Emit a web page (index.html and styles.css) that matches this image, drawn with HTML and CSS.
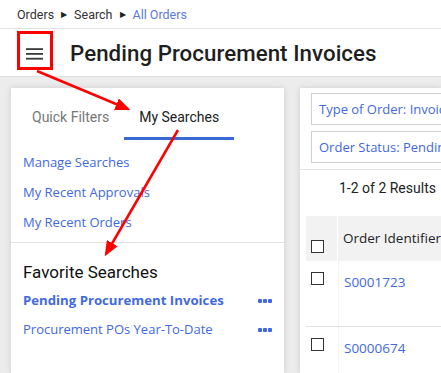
FILE: index.html
```html
<!DOCTYPE html>
<html>
<head>
<meta charset="utf-8">
<link rel="stylesheet" href="styles.css">
</head>
<body>
<nav class="crumbs">
  <span>Orders</span><span class="tri">&#9654;</span><span>Search</span><span class="tri">&#9654;</span><a class="crumb-link">All Orders</a>
</nav>
<header class="header">
  <button class="menu" aria-label="Menu">
    <svg width="17" height="12" viewBox="0 0 17 12"><rect x="0" y="0.2" width="17" height="1.8" fill="#3a3a3a"/><rect x="0" y="5" width="17" height="1.8" fill="#3a3a3a"/><rect x="0" y="9.8" width="17" height="1.8" fill="#3a3a3a"/></svg>
  </button>
  <h1 class="title">Pending Procurement Invoices</h1>
</header>
<main class="main">
  <section class="card left">
    <div class="tabs">
      <div class="tab">Quick Filters</div>
      <div class="tab active">My Searches</div>
    </div>
    <ul class="links">
      <li><a>Manage Searches</a></li>
      <li><a>My Recent Approvals</a></li>
      <li><a>My Recent Orders</a></li>
    </ul>
    <h2 class="fav-title">Favorite Searches</h2>
    <ul class="favs">
      <li class="fav current"><a>Pending Procurement Invoices</a><span class="dots"><i></i><i></i><i></i></span></li>
      <li class="fav"><a>Procurement POs Year-To-Date</a><span class="dots"><i></i><i></i><i></i></span></li>
    </ul>
  </section>
  <section class="card right">
    <div class="filters">
      <div class="chip">Type of Order: Invoice</div>
      <div class="chip">Order Status: Pending</div>
    </div>
    <div class="count">1-2 of 2 Results</div>
    <div class="table">
      <div class="row head">
        <div class="cell check"><span class="box"></span></div>
        <div class="cell id">Order Identifier</div>
      </div>
      <div class="row">
        <div class="cell check"><span class="box"></span></div>
        <div class="cell id"><a>S0001723</a></div>
      </div>
      <div class="row">
        <div class="cell check"><span class="box"></span></div>
        <div class="cell id"><a>S0000674</a></div>
      </div>
    </div>
  </section>
</main>
<svg class="annot" width="441" height="373" viewBox="0 0 441 373">
  <defs>
    <marker id="ah" markerWidth="6" markerHeight="5" refX="5" refY="2.5" orient="auto" markerUnits="strokeWidth">
      <path d="M0,0 L6,2.5 L0,5 Z" fill="#ff0000"/>
    </marker>
  </defs>
  <rect x="18.5" y="32.5" width="33" height="36" fill="none" stroke="#ff0000" stroke-width="3"/>
  <line x1="37" y1="71" x2="128" y2="109" stroke="#ff0000" stroke-width="2.5" marker-end="url(#ah)"/>
  <line x1="178" y1="130" x2="106" y2="254" stroke="#ff0000" stroke-width="2.5" marker-end="url(#ah)"/>
</svg>
</body>
</html>
```

FILE: styles.css
```css
* { box-sizing: border-box; }
html, body { margin: 0; padding: 0; }
body {
  width: 441px;
  height: 373px;
  overflow: hidden;
  position: relative;
  font-family: Roboto, "Liberation Sans", sans-serif;
  color: #212121;
  background: #ececec;
}
a { text-decoration: none; cursor: pointer; }
ul { list-style: none; margin: 0; padding: 0; }

.crumbs {
  height: 29px;
  background: #fff;
  border-bottom: 1px solid #e4e4e4;
  display: flex;
  align-items: center;
  padding-left: 17px;
  font-size: 12.5px;
  color: #333;
  gap: 6px;
}
.crumbs .tri { font-size: 8px; color: #222; margin: 0 1px; }
.crumb-link { color: #5a78e0; }

.header {
  height: 48px;
  background: #fff;
  border-bottom: 1px solid #e0e0e0;
  display: flex;
  align-items: center;
  padding-left: 26px;
}
.menu {
  border: 0;
  background: none;
  padding: 0;
  width: 17px;
  height: 12px;
  display: flex;
  margin-top: 2px;
}
.title {
  margin: 0 0 0 27px;
  font-size: 22.3px;
  font-weight: 500;
  color: #1f1f1f;
  letter-spacing: 0.05px;
}

.main {
  display: grid;
  grid-template-columns: 273px 1fr;
  column-gap: 16px;
  padding: 11px 0 0 11px;
  height: 296px;
  overflow: hidden;
}
.card {
  background: #fff;
  box-shadow: 0 0 6px rgba(0,0,0,0.14);
}
.right { overflow: hidden; }

.tabs {
  display: flex;
  padding-left: 6px;
}
.tab {
  padding: 20px 15px 11px;
  line-height: 18px;
  font-size: 14px;
  color: #767676;
  border-bottom: 3px solid transparent;
}
.tab.active {
  color: #212121;
  border-bottom-color: #3b6ad8;
}

.links {
  margin-top: 7px;
  padding: 0 0 5px 12px;
  border-bottom: 1px solid #e2e2e2;
  font-family: "Open Sans", "Noto Sans", sans-serif;
  font-size: 13px;
}
.links li { line-height: 30px; }
.links a, .favs a, .id a { color: #4169e1; }

.fav-title {
  margin: 17px 0 2px 12px;
  font-size: 17px;
  font-weight: 400;
  line-height: 24px;
  color: #111;
}
.favs {
  font-family: "Open Sans", "Noto Sans", sans-serif;
  font-size: 13px;
  padding: 0 12px;
}
.fav {
  display: flex;
  justify-content: space-between;
  align-items: center;
  line-height: 29px;
}
.fav.current a { font-weight: 700; font-size: 13.2px; }
.dots { display: flex; gap: 1px; }
.dots i {
  display: block;
  width: 4px;
  height: 4px;
  background: #4169e1;
  border-radius: 1px;
}

.filters {
  padding: 5px 0 6px 11px;
  border-bottom: 1px solid #e2e2e2;
  display: flex;
  flex-direction: column;
  gap: 6px;
}
.chip {
  height: 32px;
  margin-right: -40px;
  border: 1px solid #cfcfcf;
  padding-left: 7px;
  display: flex;
  align-items: center;
  font-family: "Open Sans", "Noto Sans", sans-serif;
  font-size: 13px;
  color: #4169e1;
  white-space: nowrap;
  overflow: hidden;
}
.count {
  padding: 8px 0 0 39px;
  line-height: 20px;
  font-size: 14px;
  color: #222;
  height: 46px;
}
.table { margin-left: 6px; }
.row {
  display: flex;
  height: 66px;
  border-bottom: 1px solid #e0e0e0;
}
.row.head {
  height: 45px;
  background: #f2f2f2;
  border-bottom: 0;
}
.cell.check {
  width: 33px;
  border-right: 1px solid #f4f4f4;
  padding: 11px 0 0 5px;
}
.row.head .cell.check { border-right: 1px solid #fff; padding-top: 24px; }
.box {
  display: block;
  width: 13px;
  height: 13px;
  border: 1px solid #333;
  background: #fff;
}
.cell.id {
  padding: 13px 0 0 5px;
  font-family: "Open Sans", "Noto Sans", sans-serif;
  font-size: 13.5px;
  color: #222;
  white-space: nowrap;
  line-height: 18px;
}
.row.head .cell.id { padding-top: 13px; }
.row .cell.id a { display: block; margin-top: -1px; }

.annot {
  position: absolute;
  left: 0;
  top: 0;
  pointer-events: none;
}
```
